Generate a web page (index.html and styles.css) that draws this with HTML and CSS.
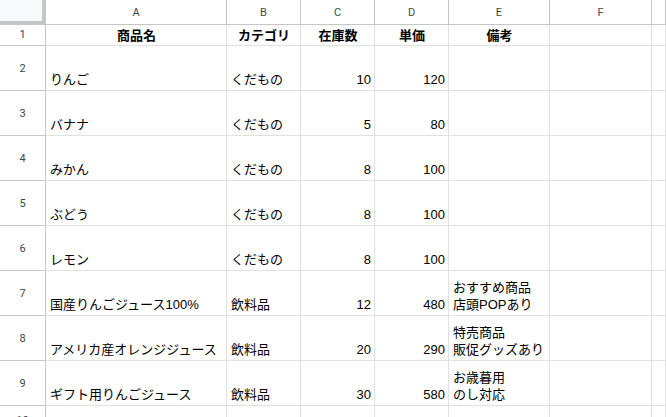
FILE: index.html
```html
<!DOCTYPE html>
<html lang="ja">
<head>
<meta charset="utf-8">
<link rel="stylesheet" href="styles.css">
</head>
<body>
<div class="sheet">
  <div class="corner"></div>
  <div class="ch">A</div><div class="ch">B</div><div class="ch">C</div><div class="ch">D</div><div class="ch">E</div><div class="ch">F</div><div class="ch last"></div>

  <div class="rh r1">1</div>
  <div class="c r1 b ctr">商品名</div><div class="c r1 b ctr">カテゴリ</div><div class="c r1 b ctr">在庫数</div><div class="c r1 b ctr">単価</div><div class="c r1 b ctr">備考</div><div class="c r1"></div><div class="c r1"></div>

  <div class="rh">2</div>
  <div class="c">りんご</div><div class="c">くだもの</div><div class="c num">10</div><div class="c num">120</div><div class="c"></div><div class="c"></div><div class="c"></div>

  <div class="rh">3</div>
  <div class="c">バナナ</div><div class="c">くだもの</div><div class="c num">5</div><div class="c num">80</div><div class="c"></div><div class="c"></div><div class="c"></div>

  <div class="rh">4</div>
  <div class="c">みかん</div><div class="c">くだもの</div><div class="c num">8</div><div class="c num">100</div><div class="c"></div><div class="c"></div><div class="c"></div>

  <div class="rh">5</div>
  <div class="c">ぶどう</div><div class="c">くだもの</div><div class="c num">8</div><div class="c num">100</div><div class="c"></div><div class="c"></div><div class="c"></div>

  <div class="rh">6</div>
  <div class="c">レモン</div><div class="c">くだもの</div><div class="c num">8</div><div class="c num">100</div><div class="c"></div><div class="c"></div><div class="c"></div>

  <div class="rh">7</div>
  <div class="c">国産りんごジュース100%</div><div class="c">飲料品</div><div class="c num">12</div><div class="c num">480</div><div class="c">おすすめ商品<br>店頭POPあり</div><div class="c"></div><div class="c"></div>

  <div class="rh">8</div>
  <div class="c">アメリカ産オレンジジュース</div><div class="c">飲料品</div><div class="c num">20</div><div class="c num">290</div><div class="c">特売商品<br>販促グッズあり</div><div class="c"></div><div class="c"></div>

  <div class="rh">9</div>
  <div class="c">ギフト用りんごジュース</div><div class="c">飲料品</div><div class="c num">30</div><div class="c num">580</div><div class="c">お歳暮用<br>のし対応</div><div class="c"></div><div class="c"></div>

  <div class="rh">10</div>
  <div class="c"></div><div class="c"></div><div class="c"></div><div class="c"></div><div class="c"></div><div class="c"></div><div class="c"></div>
</div>
</body>
</html>
```

FILE: styles.css
```css
html, body {
  margin: 0;
  padding: 0;
  background: #ffffff;
  overflow: hidden;
}

.sheet {
  display: grid;
  grid-template-columns: 46px 181px 74px 74px 74px 101px 102px 1fr;
  grid-template-rows: 25px 21px repeat(8, 45px) 30px;
  font-family: "Liberation Sans", Arial, "Noto Sans CJK JP", sans-serif;
  font-size: 13px;
  color: #000;
}

.sheet > div {
  box-sizing: border-box;
  white-space: nowrap;
  overflow: hidden;
}

.corner {
  background: #f8f9fa;
  border-right: 4px solid #c4c7c5;
  border-bottom: 4px solid #c4c7c5;
}

.ch {
  background: #ffffff;
  border-right: 1px solid #c4c7c5;
  border-bottom: 1px solid #c4c7c5;
  font-family: Roboto, "Liberation Sans", sans-serif;
  font-size: 11px;
  color: #444746;
  display: flex;
  align-items: center;
  justify-content: center;
  padding-top: 1px;
}

.rh {
  background: #ffffff;
  border-right: 1px solid #c4c7c5;
  border-bottom: 1px solid #c4c7c5;
  font-family: Roboto, "Liberation Sans", sans-serif;
  font-size: 11px;
  color: #444746;
  display: flex;
  align-items: center;
  justify-content: center;
}

.c {
  border-right: 1px solid #e1e1e1;
  border-bottom: 1px solid #e1e1e1;
  display: flex;
  flex-direction: column;
  justify-content: flex-end;
  align-items: flex-start;
  padding: 0 3px 2px 4px;
  line-height: 17px;
}

.num {
  align-items: flex-end;
}

.ctr {
  align-items: center;
}

.b {
  font-weight: bold;
}

.r1 {
  padding-bottom: 1px;
}
```
